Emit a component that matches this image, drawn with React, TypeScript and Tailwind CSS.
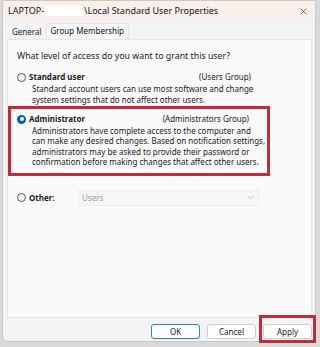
import { ChevronDown, X } from "lucide-react";

const font = { fontFamily: '"Noto Sans", "Open Sans", sans-serif' };

function Radio({ checked }: { checked?: boolean }) {
  if (checked) {
    return (
      <span className="inline-flex h-[9px] w-[9px] shrink-0 items-center justify-center rounded-full bg-[#005fb8]">
        <span className="h-[4px] w-[4px] rounded-full bg-white" />
      </span>
    );
  }
  return <span className="inline-block h-[9px] w-[9px] shrink-0 rounded-full border border-[#555] bg-[#f7f7f7]" />;
}

export default function App() {
  return (
    <div className="relative h-[347px] w-[320px] overflow-hidden bg-[#d9d9d9] text-[#1a1a1a]" style={font}>
      <div className="ml-[2px] flex h-[342px] w-[314px] flex-col rounded-b-[6px] border border-[#c9c9c9] bg-[#f3f3f3]">
        {/* barra de titulo */}
        <div className="flex h-[20px] items-center bg-gradient-to-b from-[#fbeee7] to-[#f6f0ec] pl-[5px] pr-[6px] text-[9px]">
          <span>LAPTOP-</span>
          <span className="mx-[1px] h-[10px] w-[38px] bg-white" />
          <span>\Local Standard User Properties</span>
          <X className="ml-auto h-[11px] w-[11px] text-[#333]" strokeWidth={1.3} />
        </div>

        {/* abas */}
        <div className="mt-[2px] flex items-end pl-[5px] text-[8px] leading-[10px]">
          <span className="px-[4px] pb-[2px] pt-[3px] text-[#222]">General</span>
          <span className="border-x border-t border-[#e3e3e3] bg-[#fafafa] px-[4px] pb-[3px] pt-[2px] text-[#111]">
            Group Membership
          </span>
        </div>

        {/* painel */}
        <div className="ml-[4px] mr-[3px] flex h-[279px] flex-col border border-[#e6e6e6] bg-[#fafafa] text-[8px] leading-[12px]">
          <p className="ml-[9px] mt-[10px] text-[8.8px]">What level of access do you want to grant this user?</p>

          <div className="mt-[9px] pl-[9px] pr-[60px]">
            <div className="flex items-center">
              <Radio />
              <span className="ml-[3px] font-bold">Standard user</span>
              <span className="ml-auto">(Users Group)</span>
            </div>
            <p className="ml-[15px] mt-[1px] whitespace-nowrap leading-[10.5px]">
              Standard account users can use most software and change
              <br />
              system settings that do not affect other users.
            </p>
          </div>

          <div className="mr-[41px] mt-[1px] border-[3px] border-[#c42b36] pb-[5px] pl-[6px] pr-[18px] pt-[4px]">
            <div className="flex items-center">
              <Radio checked />
              <span className="ml-[3px] font-bold">Administrator</span>
              <span className="ml-auto">(Administrators Group)</span>
            </div>
            <p className="ml-[15px] mt-[1px] whitespace-nowrap leading-[10.4px]">
              Administrators have complete access to the computer and
              <br />
              can make any desired changes. Based on notification settings,
              <br />
              administrators may be asked to provide their password or
              <br />
              confirmation before making changes that affect other users.
            </p>
          </div>

          <div className="ml-[9px] mt-[14px] flex items-center">
            <Radio />
            <span className="ml-[3px] w-[49px] font-bold">Other:</span>
            <div className="flex h-[16px] w-[181px] items-center rounded-[2px] border border-[#ececec] bg-[#f6f6f6] pl-[3px] pr-[3px] text-[#9a9a9a]">
              <span>Users</span>
              <ChevronDown className="ml-auto h-[9px] w-[9px] text-[#b0b0b0]" />
            </div>
          </div>
        </div>

        {/* botoes */}
        <div className="mt-[6px] flex justify-end gap-[7px] pr-[3px] text-[8px]">
          <button className="h-[15px] w-[49px] rounded-[3px] border border-[#2f7fc7] bg-[#fdfdfd]">OK</button>
          <button className="h-[15px] w-[49px] rounded-[3px] border border-[#d0d0d0] bg-[#fdfdfd]">Cancel</button>
          <button className="h-[15px] w-[49px] rounded-[3px] border border-[#d0d0d0] bg-[#fdfdfd]">Apply</button>
        </div>
      </div>

      {/* destaque vermelho sobre o botao Apply */}
      <div className="absolute left-[259px] top-[315px] h-[28px] w-[57px] border-[3px] border-[#c42b36]" />
    </div>
  );
}
